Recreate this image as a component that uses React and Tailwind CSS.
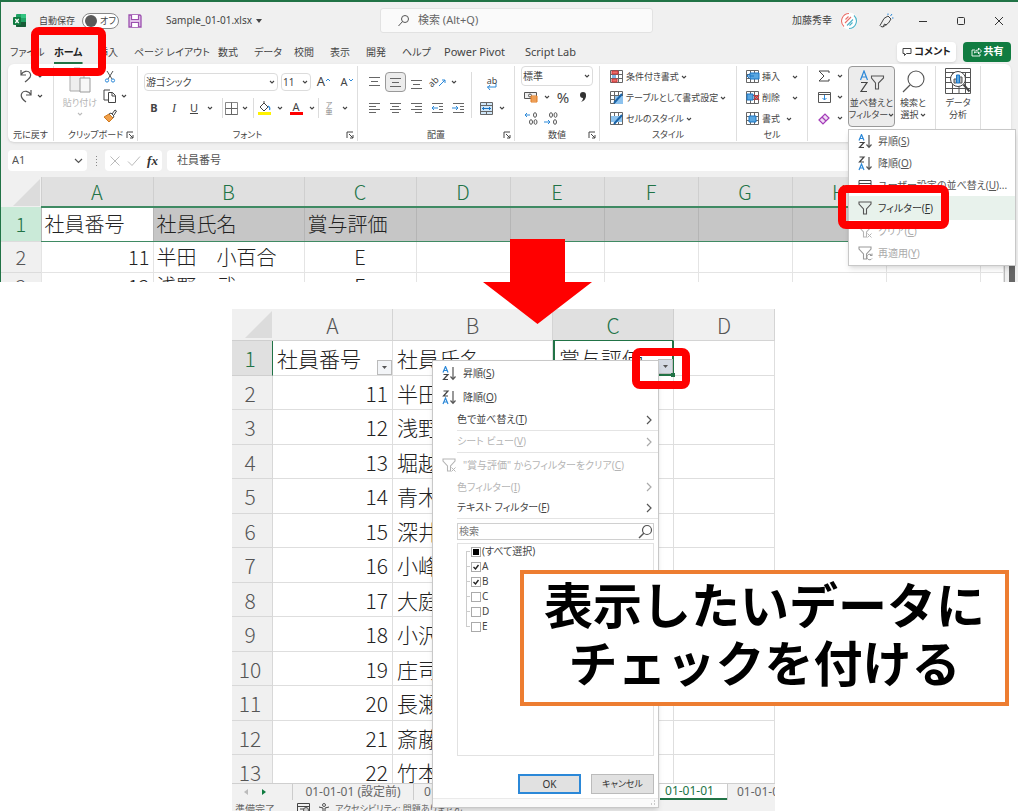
import React from "react";

const UI = "font-['Noto_Sans','Noto_Sans_CJK_JP',sans-serif] [font-feature-settings:'palt']";
const CELL = "font-['Noto_Sans_CJK_JP',sans-serif]";

function Svg({ w = 14, h = 14, box, className = "", children }) {
  return (
    <svg width={w} height={h} viewBox={box || `0 0 ${w} ${h}`} fill="none" stroke="#555" strokeWidth="1" className={`shrink-0 ${className}`} aria-hidden="true">
      {children}
    </svg>
  );
}

const Chevron = ({ className = "", color = "#444" }) => (
  <Svg w={6} h={6} className={className}>
    <path d="M1 2l2 2 2-2" stroke={color} strokeWidth="1.1" />
  </Svg>
);

const Right = ({ color = "#555" }) => (
  <Svg w={8} h={10} className="ml-auto">
    <path d="M2 1l4 4-4 4" stroke={color} strokeWidth="1.2" />
  </Svg>
);

const Launcher = () => (
  <Svg w={8} h={8}>
    <path d="M1 7V1h6M3 3l4 4M7 4v3H4" stroke="#444" />
  </Svg>
);

const Highlight = ({ className }) => (
  <span className={`pointer-events-none absolute z-20 rounded-lg border-8 border-[#ff0000] ${className}`} />
);

const SortIcon = ({ desc }) => (
  <Svg w={15} h={15}>
    {desc ? (
      <>
        <path d="M1.500 1h4.500l-4.500 5h4.500" stroke="#444" strokeWidth="1.200" />
        <path d="M1 14l2.500-6 2.500 6M2 12h3.500" stroke="#2b88d8" strokeWidth="1.200" />
      </>
    ) : (
      <>
        <path d="M1 6.500l2.500-6 2.500 6M2 4.500h3.500" stroke="#2b88d8" strokeWidth="1.200" />
        <path d="M1.500 8.500h4.500l-4.500 5h4.500" stroke="#444" strokeWidth="1.200" />
      </>
    )}
    <path d="M11 1v12M8.500 10.500l2.500 2.800 2.500-2.800" stroke="#555" strokeWidth="1.200" />
  </Svg>
);

const Funnel = ({ color = "#555", extra }) => (
  <Svg w={15} h={15}>
    <path d="M1 1h12v2l-4.500 5v5h-3v-5l-4.500-5z" stroke={color} strokeWidth="1.100" />
    {extra === "x" && <path d="M9.500 9.500l4 4M13.500 9.500l-4 4" stroke={color} />}
    {extra === "r" && <path d="M14 9.500a2.800 2.800 0 1 0 0 3M14 7.500v2h-2" stroke={color} />}
  </Svg>
);

const Lines = ({ rows }) => (
  <Svg w={13} h={13}>
    {rows.map(([x1, x2, y], i) => (
      <path key={i} d={`M${x1} ${y}.5H${x2}`} stroke="#666" />
    ))}
  </Svg>
);

function Tool({ label, className = "w-5", children }) {
  return (
    <button type="button" aria-label={label} className={`flex h-5 shrink-0 items-center justify-center ${className}`}>
      {children}
    </button>
  );
}

const More = ({ label }) => (
  <Tool label={label} className="w-3">
    <Chevron />
  </Tool>
);

const Rule = () => <span className="h-5 w-px shrink-0 bg-[#dcdcdc]" />;

function Group({ label, launcher, width, children }) {
  return (
    <section className={`flex shrink-0 flex-col border-r border-[#dedede] ${width}`}>
      <div className="h-[63px]">{children}</div>
      <div className="relative flex h-3 items-center justify-center text-[9px] leading-3 text-[#444]">
        {label}
        {launcher && (
          <button type="button" aria-label={`${label}の設定`} className="absolute right-[3px]">
            <Launcher />
          </button>
        )}
      </div>
    </section>
  );
}

function Combo({ label, value, className }) {
  return (
    <label className={`relative flex items-center rounded border border-[#dcdcdc] bg-white ${className}`}>
      <select aria-label={label} className="h-full w-full appearance-none bg-transparent px-px text-[10px] leading-4 text-[#444] outline-none">
        <option>{value}</option>
      </select>
      <Chevron className="pointer-events-none absolute right-[2px]" />
    </label>
  );
}

const TABS = [
  ["ファイル", "w-11"],
  ["ホーム", "w-11"],
  ["挿入", "w-9"],
  ["ページ レイアウト", "w-[84px]"],
  ["数式", "w-9"],
  ["データ", "w-10"],
  ["校閲", "w-9"],
  ["表示", "w-9"],
  ["開発", "w-9"],
  ["ヘルプ", "w-[42px]"],
  ["Power Pivot", "w-[81px]"],
  ["Script Lab", "w-20"],
];

function TitleBar() {
  return (
    <header className="flex h-[37px] items-center text-[10px] text-[#444]">
      <div className="flex w-[379px] shrink-0 items-center">
        <Svg w={13} h={13} className="ml-3">
          <rect x="3" y="0" width="10" height="13" rx="1" fill="#21a366" stroke="none" />
          <path d="M8 0h4a1 1 0 0 1 1 1v3H8z" fill="#33c481" stroke="none" />
          <path d="M3 8h10v4a1 1 0 0 1-1 1H4a1 1 0 0 1-1-1z" fill="#185c37" stroke="none" />
          <rect x="0" y="3" width="8" height="8" rx="1" fill="#107c41" stroke="none" />
          <path d="M2.300 5l3.400 4M5.700 5l-3.400 4" stroke="#fff" strokeWidth="1.200" />
        </Svg>
        <span className="ml-[13px] text-[9px]">自動保存</span>
        <button type="button" role="switch" aria-checked="false" aria-label="自動保存" className="ml-[7px] flex h-4 w-[37px] items-center gap-[3px] rounded-full border border-[#888] bg-white pl-[2px] text-[9px]">
          <span className="size-3 rounded-full bg-[#5a5a5a]" />
          オフ
        </button>
        <button type="button" aria-label="上書き保存" className="ml-[9px]">
          <Svg w={14} h={14}>
            <path d="M1 1h11l1 1v11H1z" fill="#e3c3ea" stroke="#9b4fae" strokeWidth="1.300" />
            <path d="M3.500 1v4.500h7V1M3.500 13V8.500h7V13" fill="#fff" stroke="#9b4fae" strokeWidth="1.200" />
          </Svg>
        </button>
        <span className="ml-6">Sample_01-01.xlsx</span>
        <Svg w={6} h={4} className="ml-1">
          <path d="M0 0h6l-3 4z" fill="#444" stroke="none" />
        </Svg>
      </div>
      <label className="flex h-[25px] flex-1 items-center gap-2 rounded-[3px] border border-[#e2e2e2] bg-[#fafafa] pl-4">
        <Svg w={13} h={13}>
          <circle cx="8" cy="5" r="3.500" />
          <path d="M5.500 7.500l-4 4.500" />
        </Svg>
        <input aria-label="検索" placeholder="検索 (Alt+Q)" className="min-w-0 flex-1 bg-transparent text-[11px] outline-none placeholder:text-[#666]" />
      </label>
      <div className="flex w-[365px] shrink-0 items-center pl-[139px]">
        <span className="text-[10px]">加藤秀幸</span>
        <Svg w={18} h={18} className="ml-2">
          <circle cx="9" cy="9" r="8.500" fill="#fff" stroke="none" />
          <path d="M9 1.500a7.500 7.500 0 0 0-5 13M5 11l6-6M5.500 7.500l3-3" stroke="#e8706a" strokeWidth="1.100" />
          <path d="M9 16.500a7.500 7.500 0 0 0 5-13M7 13.500l6-6M9.500 13.500l3-3" stroke="#4fb3c9" strokeWidth="1.100" />
        </Svg>
        <Svg w={16} h={16} className="ml-5">
          <path d="M2 12.500L6 5.500l4-2.500 3 3-2.500 4L5 14l-2-.5zM5 14l1.500-3 2 1" stroke="#444" strokeLinejoin="round" />
          <path d="M10 .500v1.500M12.500 3l1.500-2M14 5h1.500" stroke="#2b88d8" />
        </Svg>
        <button type="button" aria-label="最小化" className="ml-6">
          <Svg w={10} h={10}><path d="M1 5.500h8" stroke="#333" /></Svg>
        </button>
        <button type="button" aria-label="最大化" className="ml-7">
          <Svg w={10} h={10}><rect x="1.500" y="1.500" width="7" height="7" rx="1" stroke="#333" /></Svg>
        </button>
        <button type="button" aria-label="閉じる" className="ml-7">
          <Svg w={10} h={10}><path d="M1 1l8 8M9 1l-8 8" stroke="#333" /></Svg>
        </button>
      </div>
    </header>
  );
}

function TabBar() {
  return (
    <nav className="flex h-[25px] items-center pl-[9px] text-[10px] text-[#444]">
      {TABS.map(([name, width]) => (
        <div key={name} className={`relative shrink-0 ${width}`}>
          <button type="button" className={`whitespace-nowrap leading-5 ${name === "ホーム" ? "font-bold text-[#222] underline decoration-[#217346] decoration-2 underline-offset-[6px]" : ""} ${/^[PS]/.test(name) ? "text-[11px]" : ""}`}>
            {name}
          </button>
          {name === "ホーム" && <Highlight className="-left-[23px] -top-[15px] h-[49px] w-[75px]" />}
        </div>
      ))}
      <div className="ml-auto flex gap-[7px] pr-[7px] font-bold">
        <button type="button" className="flex h-5 w-[59px] items-center justify-center gap-[2px] rounded bg-white text-[#222] shadow-sm">
          <Svg w={10} h={10}><path d="M1 1.500h8v5H4.500L2.500 8.500v-2H1z" stroke="#444" /></Svg>
          コメント
        </button>
        <button type="button" className="flex h-5 w-12 items-center justify-center gap-[2px] rounded bg-[#107c41] text-white">
          <Svg w={11} h={10}><path d="M4 3H1v6h8V7M3.500 6c0-2.500 2-3 4-3V1l3 3-3 3V5c-2 0-3 0-4 1z" stroke="#fff" strokeWidth=".9" /></Svg>
          共有
        </button>
      </div>
    </nav>
  );
}

const GridBase = ({ children }) => (
  <Svg w={14} h={13}>
    <path d="M.5.5h12v12H.5zM.5 4.500h12M.5 8.500h12M4.500.5v12M8.500.5v12" stroke="#666" />
    {children}
  </Svg>
);

function SortMenu() {
  const items = [
    { icon: <SortIcon />, text: "昇順", key: "S" },
    { icon: <SortIcon desc />, text: "降順", key: "O" },
    {
      icon: (
        <Svg w={15} h={15}>
          <path d="M1 2.500h12v11H1zM1 5.500h12M4 11V8M7 8h3M7 11h3" stroke="#444" />
        </Svg>
      ),
      text: "ユーザー設定の並べ替え",
      key: "U",
      tail: "...",
    },
    { icon: <Funnel />, text: "フィルター", key: "F", active: true },
    { icon: <Funnel color="#b5b5b5" extra="x" />, text: "クリア", key: "C", off: true },
    { icon: <Funnel color="#999" extra="r" />, text: "再適用", key: "Y", off: true },
  ];
  return (
    <ul className="absolute left-0 top-full z-10 w-[168px] border border-[#c8c8c8] bg-white pb-px text-left text-[10px] text-[#555] shadow-md">
      {items.map((it) => (
        <li key={it.text} className={`relative ${it.active ? "bg-[#e8f2ec]" : ""}`}>
          <button type="button" disabled={it.off} className={`flex w-full items-center gap-[5px] whitespace-nowrap pl-[9px] ${it.active ? "h-6 text-[#333]" : "h-[22px]"} ${it.off ? "text-[#aaa]" : ""}`}>
            {it.icon}
            <span>
              {it.text}(<u>{it.key}</u>){it.tail}
            </span>
          </button>
          {it.active && <Highlight className="-left-[11px] -top-[11px] h-11 w-[111px]" />}
        </li>
      ))}
    </ul>
  );
}

function Ribbon() {
  return (
    <div className="mx-[7px] flex h-[78px] rounded-md bg-white pb-px pt-[2px] text-[9px] text-[#444] shadow-sm">
      <Group label="元に戻す" width="w-[46px]">
        <div className="flex items-center pl-[10px]">
          <Tool label="元に戻す" className="w-4">
            <Svg w={14} h={14}><path d="M2 1v5h5M2 6c2-4 7-5 9-2s0 5-5 9" strokeWidth="1.200" /></Svg>
          </Tool>
          <More label="元に戻すの履歴" />
        </div>
        <div className="flex items-center pl-[10px]">
          <Tool label="やり直し" className="w-4">
            <Svg w={14} h={14}><path d="M12 1v5H7M12 6C10 2 5 1 3 4s0 6 4 9" strokeWidth="1.200" /></Svg>
          </Tool>
          <More label="やり直しの履歴" />
        </div>
      </Group>

      <Group label="クリップボード" launcher width="w-[84px]">
        <div className="flex pl-2">
          <button type="button" className="flex w-9 flex-col items-center text-[#b5b5b5]">
            <Svg w={24} h={28} className="mb-px">
              <path d="M2 4h14v21H2z" fill="#eee" stroke="#aaa" />
              <path d="M6 2h6v4H6z" fill="#ccc" stroke="#aaa" />
              <path d="M12 12h10v14H12z" fill="#f7f7f7" stroke="#999" />
            </Svg>
            <span className="-mx-1 whitespace-nowrap leading-4">貼り付け</span>
            <Chevron color="#bbb" />
          </button>
          <div className="ml-1 flex flex-col">
            <Tool label="切り取り" className="w-4">
              <Svg w={12} h={13}>
                <path d="M3 1l5 8M9 1L4 9" stroke="#555" />
                <circle cx="3" cy="10.500" r="1.600" stroke="#2b88d8" />
                <circle cx="9" cy="10.500" r="1.600" stroke="#2b88d8" />
              </Svg>
            </Tool>
            <div className="flex">
              <Tool label="コピー" className="w-4">
                <Svg w={14} h={14}><path d="M5 11H1V1h6M5.500 3.500h4l3 3v7h-7zM9 3.500V7h3.500" stroke="#444" /></Svg>
              </Tool>
              <More label="コピーの種類" />
            </div>
            <Tool label="書式のコピー" className="w-4">
              <Svg w={14} h={14}>
                <path d="M1 8l5-3 4 4-4 4z" fill="#f0a04b" stroke="#d07a20" />
                <path d="M6 5l2-1 3 3-1 2M9 5l3-4 1.500 1L11 6" stroke="#444" />
              </Svg>
            </Tool>
          </div>
        </div>
      </Group>

      <Group label="フォント" launcher width="w-[220px]">
        <div className="flex h-8 items-center gap-[3px] pl-[6px]">
          <Combo label="フォント名" value="游ゴシック" className="h-[18px] w-[134px]" />
          <Combo label="フォント サイズ" value="11" className="h-[18px] w-[30px]" />
          <Tool label="拡大"><span className="text-[13px]">A</span><Svg w={6} h={10}><path d="M1 4l2-2 2 2" stroke="#2b88d8" /></Svg></Tool>
          <Tool label="縮小"><span className="text-[11px]">A</span><Svg w={6} h={10}><path d="M1 2l2 2 2-2" stroke="#2b88d8" /></Svg></Tool>
        </div>
        <div className="flex h-5 items-center pl-[6px] text-[11px]">
          <Tool label="太字"><b>B</b></Tool>
          <Tool label="斜体"><i className="font-['Liberation_Serif',serif] text-[12px]">I</i></Tool>
          <Tool label="下線"><u>U</u></Tool>
          <More label="下線の種類" />
          <span className="w-[6px]" /><Rule />
          <Tool label="罫線" className="w-4">
            <Svg w={13} h={13}><path d="M.5.5h12v12H.5z" stroke="#888" /><path d="M6.500.5v12M.5 6.500h12M.5 12.500h12" stroke="#666" /></Svg>
          </Tool>
          <More label="罫線の種類" />
          <span className="w-[2px]" /><Rule />
          <Tool label="塗りつぶし">
            <Svg w={13} h={14}>
              <path d="M2 6l4-4 4 4-4 4zM6 2V0" stroke="#444" />
              <path d="M10 5c2 1 2 3 1.500 4" stroke="#2b88d8" strokeWidth="1.300" />
              <path d="M0 11h13v3H0z" fill="#fff200" stroke="none" />
            </Svg>
          </Tool>
          <More label="塗りつぶしの色" />
          <Tool label="文字色">
            <span className="flex flex-col items-center"><span className="text-[11px] leading-[11px]">A</span><span className="h-[3px] w-[13px] bg-[#ff0000]" /></span>
          </Tool>
          <More label="文字色の選択" />
          <Rule />
          <Tool label="ふりがな">
            <span className="flex flex-col text-[7px] leading-[7px] text-[#888]"><span>ア</span><span>亜</span></span>
          </Tool>
          <More label="ふりがなの設定" />
        </div>
      </Group>

      <Group label="配置" launcher width="w-[157px]">
        <div className="flex pl-[6px]">
          <div className="flex w-[107px] flex-col">
            <div className="flex h-8 items-center">
              <Tool label="上揃え" className="w-[21px]"><Lines rows={[[1, 12, 1], [3, 10, 5], [1, 12, 9]]} /></Tool>
              <Tool label="上下中央揃え" className="w-[21px] rounded border border-[#999] bg-[#ececec]"><Lines rows={[[1, 12, 2], [3, 10, 6], [1, 12, 10]]} /></Tool>
              <Tool label="下揃え" className="w-[21px]"><Lines rows={[[1, 12, 4], [3, 10, 8], [1, 12, 12]]} /></Tool>
              <Tool label="方向" className="w-[21px]">
                <span className="-rotate-45 text-[9px]">ab</span>
                <Svg w={8} h={10}><path d="M0 9l6-6M3 3h3v3" stroke="#2b88d8" /></Svg>
              </Tool>
              <More label="方向の選択" />
            </div>
            <div className="flex h-5 items-center">
              <Tool label="左揃え" className="w-[21px]"><Lines rows={[[1, 12, 1], [1, 8, 4], [1, 12, 7], [1, 8, 10]]} /></Tool>
              <Tool label="中央揃え" className="w-[21px]"><Lines rows={[[1, 12, 1], [3, 10, 4], [1, 12, 7], [3, 10, 10]]} /></Tool>
              <Tool label="右揃え" className="w-[21px]"><Lines rows={[[1, 12, 1], [5, 12, 4], [1, 12, 7], [5, 12, 10]]} /></Tool>
              <Tool label="インデントを減らす" className="w-[21px]">
                <Svg w={13} h={13}><path d="M1 1.500h11M8 4.500h4M8 7.500h4M1 10.500h11" stroke="#666" /><path d="M7 6H1M3 4L1 6l2 2" stroke="#2b88d8" /></Svg>
              </Tool>
              <Tool label="インデントを増やす" className="w-[21px]">
                <Svg w={13} h={13}><path d="M1 1.500h11M8 4.500h4M8 7.500h4M1 10.500h11" stroke="#666" /><path d="M0 6h6M4 4l2 2-2 2" stroke="#2b88d8" /></Svg>
              </Tool>
            </div>
          </div>
          <div className="mt-[6px] flex flex-col border-l border-[#dcdcdc] pl-1">
            <Tool label="折り返し" className="h-6">
              <span className="flex flex-col items-center text-[9px] leading-[7px]">ab<Svg w={12} h={7}><path d="M1 3h9v-3M4 1L2 3.500 4 6" stroke="#2b88d8" /></Svg></span>
            </Tool>
            <div className="flex pt-[2px]">
              <Tool label="セルを結合">
                <Svg w={13} h={13}>
                  <path d="M.5.5h12v12H.5z" fill="#cfe6f8" stroke="#666" />
                  <path d="M.5 3.500h12M.5 9.500h12M6.500.5v3M6.500 9.500v3" stroke="#666" />
                  <path d="M2 6.500h9M4 5L2.500 6.500 4 8M9 5l1.500 1.500L9 8" stroke="#1b74c4" />
                </Svg>
              </Tool>
              <More label="結合の種類" />
            </div>
          </div>
        </div>
      </Group>

      <Group label="数値" launcher width="w-[85px]">
        <div className="px-[6px]">
          <Combo label="表示形式" value="標準" className="h-5" />
          <div className="flex h-[22px] items-center">
            <Tool label="通貨">
              <Svg w={14} h={12}>
                <path d="M.5 1.500h12v6H.5z" fill="#eee" stroke="#555" /><circle cx="6" cy="4.500" r="1.500" />
                <path d="M7 5h6v6H7zM7 7h6M7 9h6" fill="#f9c18a" stroke="#e07b20" />
              </Svg>
            </Tool>
            <More label="通貨の種類" />
            <Tool label="パーセント"><span className="text-[15px] leading-5">%</span></Tool>
            <Tool label="桁区切り"><svg width="8" height="12" viewBox="0 0 8 12" aria-hidden="true"><circle cx="4" cy="4" r="3" fill="#333" /><path d="M7 4c0 4-2 6-5 7 2-2 2-3 2-5z" fill="#333" /></svg></Tool>
          </div>
          <div className="flex">
            <Tool label="小数点以下を増やす">
              <Svg w={14} h={13}><path d="M6 3H1M3 1L1 3l2 2" stroke="#2b88d8" /><ellipse cx="11" cy="3" rx="1.500" ry="2.300" /><ellipse cx="7" cy="10" rx="1.500" ry="2.300" /><ellipse cx="11.500" cy="10" rx="1.500" ry="2.300" /></Svg>
            </Tool>
            <Tool label="小数点以下を減らす">
              <Svg w={14} h={13}><path d="M0 10h6M4 8l2 2-2 2" stroke="#2b88d8" /><ellipse cx="7" cy="3" rx="1.500" ry="2.300" /><ellipse cx="11.500" cy="3" rx="1.500" ry="2.300" /><ellipse cx="11" cy="10" rx="1.500" ry="2.300" /></Svg>
            </Tool>
          </div>
        </div>
      </Group>

      <Group label="スタイル" width="w-[137px]">
        <div className="flex flex-col pl-[10px]">
          <button type="button" className="flex h-[21px] items-center gap-[2px] whitespace-nowrap">
            <GridBase><path d="M2 1h6v3H2zM2 9h5v3H2z" fill="#e8706a" stroke="#d13438" /><path d="M2 5h4v3H2z" fill="#7fb7e6" stroke="none" /></GridBase>
            条件付き書式 <Chevron />
          </button>
          <button type="button" className="flex h-[21px] items-center gap-[2px] whitespace-nowrap">
            <GridBase><path d="M5 5h8v8H5z" fill="#8cc2ee" stroke="none" /><path d="M4 12l8-9" stroke="#1b64a8" strokeWidth="2" /></GridBase>
            テーブルとして書式設定 <Chevron />
          </button>
          <button type="button" className="flex h-[21px] items-center gap-[2px] whitespace-nowrap">
            <GridBase><path d="M1 4h11v6H1z" fill="#8cc2ee" stroke="none" /><path d="M4 12l8-9" stroke="#1b64a8" strokeWidth="2" /></GridBase>
            セルのスタイル <Chevron />
          </button>
        </div>
      </Group>

      <Group label="セル" width="w-[71px]">
        <div className="flex flex-col pl-[9px]">
          <button type="button" className="flex h-[21px] items-center gap-[2px]">
            <GridBase><path d="M4 3h9v6H4z" fill="#5ba7e0" stroke="#1b74c4" /><path d="M8 6H1M3 4L1 6l2 2" stroke="#1b74c4" /></GridBase>
            挿入 <Chevron className="ml-[10px]" />
          </button>
          <button type="button" className="flex h-[21px] items-center gap-[2px]">
            <GridBase><path d="M1 3h6v6H1z" fill="#5ba7e0" stroke="#1b74c4" /><path d="M8 4l5 5M13 4L8 9" stroke="#d13438" strokeWidth="1.400" /></GridBase>
            削除 <Chevron className="ml-[10px]" />
          </button>
          <button type="button" className="flex h-[21px] items-center gap-[2px]">
            <GridBase><path d="M3 4h7v6H3z" fill="#5ba7e0" stroke="#1b74c4" /></GridBase>
            書式 <Chevron className="ml-1" />
          </button>
        </div>
      </Group>

      <Group label="" width="w-[128px]">
        <div className="flex">
          <div className="flex w-10 shrink-0 flex-col pl-[6px]">
            <div className="flex h-[21px]"><Tool label="合計"><Svg w={12} h={12}><path d="M11 3V1H1l5 5-5 5h10V9" stroke="#444" /></Svg></Tool><More label="集計" /></div>
            <div className="flex h-[21px]"><Tool label="フィル"><Svg w={13} h={11}><path d="M.5.5h12v10H.5zM.5 2.500h12" /><path d="M6.500 3v5M4.500 6l2 2 2-2" stroke="#2b88d8" /></Svg></Tool><More label="フィルの方向" /></div>
            <div className="flex h-[21px]"><Tool label="クリア"><Svg w={13} h={13}><path d="M1 8l6-6 4 4-6 6zM4 5l4 4" fill="#f1dcf5" stroke="#a33cb8" strokeWidth="1.200" /></Svg></Tool><More label="クリアの種類" /></div>
          </div>
          <div className="relative w-[47px] shrink-0">
            <button type="button" aria-expanded="true" className="flex h-[61px] w-full flex-col items-center rounded border border-[#999] bg-[#ececec] pt-[3px] leading-3">
              <Svg w={26} h={23} className="mb-1">
                <path d="M1.500 10L5 1l3.500 9M2.500 7h5" stroke="#2b88d8" strokeWidth="1.200" />
                <path d="M2 12.500h6L2 21.500h6" stroke="#444" strokeWidth="1.200" />
                <path d="M12.500 6h12v2l-5 5v6h-3v-6l-4-5z" stroke="#555" strokeWidth="1.100" />
              </Svg>
              <span className="whitespace-nowrap">並べ替えと</span>
              <span className="flex items-center whitespace-nowrap">フィルター<Chevron /></span>
            </button>
            <SortMenu />
          </div>
          <button type="button" className="flex w-[36px] flex-col items-center pt-1 leading-3">
            <Svg w={26} h={23} className="mb-1"><circle cx="16" cy="9" r="8" strokeWidth="1.100" /><path d="M10 15l-7 7" strokeWidth="1.200" /></Svg>
            <span className="whitespace-nowrap">検索と</span>
            <span className="flex items-center gap-px whitespace-nowrap">選択<Chevron /></span>
          </button>
        </div>
      </Group>

      <Group label="" width="w-[45px]">
        <button type="button" className="flex w-full flex-col items-center pt-[2px] leading-3">
          <Svg w={26} h={26} className="mb-[3px]">
            <path d="M.5.5h25v25H.5zM.5 4.500h25M.5 9.500h25M.5 14.500h25M.5 20.500h25M7.500 4v21M14 14v11M20.500 4v21" stroke="#555" />
            <circle cx="13" cy="11" r="7.500" fill="#fff" stroke="#444" />
            <path d="M18.500 16.500l6 7" stroke="#444" strokeWidth="2" />
            <path d="M9 11h2.500v4H9zM14.500 9H17v6h-2.500z" fill="#bbb" /><path d="M11.500 7h3v8h-3z" fill="#5ba7e0" stroke="#1b74c4" />
          </Svg>
          <span>データ</span>
          <span>分析</span>
        </button>
      </Group>
    </div>
  );
}

function FormulaBar() {
  return (
    <div className="mx-[7px] mt-2 flex h-[21px] items-stretch text-[10px] text-[#555]">
      <label className="flex w-[79px] items-center justify-between rounded bg-white px-1">
        <input aria-label="名前ボックス" defaultValue="A1" className="w-10 bg-transparent text-[11px] outline-none" />
        <Svg w={9} h={9}><path d="M1 3l3.500 3.500L8 3" strokeWidth="1.200" /></Svg>
      </label>
      <span className="flex w-[18px] flex-col items-center justify-center gap-[2px]">
        <i className="size-px bg-[#888]" /><i className="size-px bg-[#888]" /><i className="size-px bg-[#888]" /><i className="size-px bg-[#888]" />
      </span>
      <div className="flex w-[57px] items-center justify-around rounded bg-white px-px">
        <button type="button" aria-label="キャンセル"><Svg w={12} h={12}><path d="M1.500 1.500l9 9M10.500 1.500l-9 9" stroke="#bbb" /></Svg></button>
        <button type="button" aria-label="入力"><Svg w={14} h={12}><path d="M1 6.500l4 4 8-9" stroke="#bbb" /></Svg></button>
        <button type="button" className="font-['Liberation_Serif',serif] text-[13px] font-bold italic text-[#333]">fx</button>
      </div>
      <input aria-label="数式バー" defaultValue="社員番号" className="ml-[5px] min-w-0 flex-1 rounded bg-white pl-[10px] text-[11px] outline-none" />
    </div>
  );
}

const Corner = () => (
  <svg className="ml-auto mr-px block h-[27px] w-[27px]" viewBox="0 0 27 27" aria-hidden="true">
    <path d="M27 0v27H0z" fill="#dcdcdc" />
  </svg>
);

function TopSheet() {
  const cols = ["A", "B", "C", "D", "E", "F", "G", "H", "I", ""];
  const rows = [
    ["1", "社員番号", "社員氏名", "賞与評価"],
    ["2", "11", "半田　小百合", "E"],
    ["3", "12", "浅野　武", "E"],
  ];
  const heights = ["h-[34px]", "h-[31px]", "h-7"];
  return (
    <div className={`mt-[6px] flex h-[105px] overflow-hidden ${CELL}`}>
      <div className="min-w-0 flex-1">
        <table className="w-full table-fixed border-collapse text-[20px] leading-6 font-light text-[#222]">
          <colgroup>
            <col className="w-10" />
            <col className="w-[112px]" />
            <col className="w-[151px]" />
            <col className="w-[112px]" />
            {cols.slice(3, 9).map((c) => <col key={c} className="w-[94px]" />)}
            <col />
          </colgroup>
          <thead>
            <tr className="h-[30px]">
              <th className="bg-[#f0f0f0] p-0"><Corner /></th>
              {cols.map((c) => (
                <th key={c} scope="col" className="border-x border-[#cfcfcf] bg-[#e0e0e0] p-0 font-light text-[#217346]">{c}</th>
              ))}
            </tr>
          </thead>
          <tbody>
            {rows.map((r, i) => (
              <tr key={r[0]} className={heights[i]}>
                <th scope="row" className={`p-0 font-light ${i === 0 ? "bg-[#caead8] text-[#217346]" : "border-t border-[#dcdcdc] bg-[#f0f0f0] text-[#555]"}`}>{r[0]}</th>
                {cols.map((c, j) => (
                  <td
                    key={c}
                    className={`whitespace-nowrap border px-[3px] py-0 ${i === 0 ? "border-x-[#b5b5b5] border-t-2 border-y-[#3f8a63]" : "border-[#e4e4e4]"} ${i === 0 && j > 0 ? "bg-[#c6c6c6]" : "bg-white"} ${j === 0 && i > 0 ? "text-right" : ""} ${j === 2 && i > 0 ? "text-center" : ""}`}
                  >
                    {r[j + 1]}
                  </td>
                ))}
              </tr>
            ))}
          </tbody>
        </table>
      </div>
      <div className="flex w-[14px] justify-center border-l border-[#bbb] bg-[#f0f0f0]">
        <span className="mt-[86px] h-5 w-[6px] bg-[#666]" />
      </div>
    </div>
  );
}

const FilterButton = ({ label, className }) => (
  <button type="button" aria-label={label} className={`absolute flex size-[15px] items-center justify-center border border-[#bbb] ${className}`}>
    <Svg w={5} h={3}><path d="M0 0h5l-2.500 3z" fill="#555" stroke="none" /></Svg>
  </button>
);

const PEOPLE = [
  ["11", "半田"], ["12", "浅野"], ["13", "堀越"], ["14", "青木"], ["15", "深井"], ["16", "小峰"],
  ["17", "大庭"], ["18", "小沢"], ["19", "庄司"], ["20", "長瀬"], ["21", "斎藤"], ["22", "竹本"],
];

function FilterSheet() {
  const line = "border-r border-b border-[#dedede] py-0";
  return (
    <div className={`h-[474px] overflow-hidden ${CELL}`}>
      <table className="w-full table-fixed border-separate border-spacing-0 text-[21px] leading-6 font-light text-[#222]">
        <colgroup>
          <col className="w-[41px]" />
          <col className="w-[120px]" />
          <col className="w-40" />
          <col className="w-[121px]" />
          <col />
        </colgroup>
        <thead>
          <tr className="h-8 text-[#555]">
            <th className="border-b border-[#cfcfcf] bg-[#f0f0f0] p-0"><Corner /></th>
            {["A", "B", "C", "D"].map((c) => (
              <th key={c} scope="col" className={`border-r border-b p-0 font-light ${c === "C" ? "border-[#cfcfcf] border-b-[#217346] bg-[#e0e0e0] text-[#217346]" : "border-[#d4d4d4] bg-[#f0f0f0]"}`}>{c}</th>
            ))}
          </tr>
        </thead>
        <tbody>
          <tr className="h-[35px]">
            <th scope="row" className="border-b border-r border-[#cfcfcf] border-r-[#217346] bg-[#e0e0e0] p-0 pr-1 font-light text-[#217346]">1</th>
            <td className={`relative px-1 ${line}`}>社員番号<FilterButton label="社員番号のフィルター" className="bottom-0 right-0 bg-[#f3f5f8]" /></td>
            <td className={`px-1 ${line}`}>社員氏名</td>
            <td className="relative border-2 border-t-0 border-[#217346] px-1 py-0">
              賞与評価
              <FilterButton label="賞与評価のフィルター" className="-right-px bottom-0 bg-[#d5dbe4]" />
              <span className="absolute -bottom-[3px] -right-[3px] size-1 bg-[#217346]" />
              <Highlight className="-right-[18px] -bottom-[15px] h-[41px] w-[58px]" />
            </td>
            <td className={line} />
          </tr>
          {PEOPLE.map(([n, name], i) => (
            <tr key={n} className="odd:h-[35px] even:h-[34px]">
              <th scope="row" className="border-b border-r border-[#d8d8d8] bg-[#f0f0f0] p-0 pr-1 font-light text-[#555]">{i + 2}</th>
              <td className={`px-1 text-right ${line}`}>{n}</td>
              <td className={`px-1 ${line}`}>{name}</td>
              <td className={line} />
              <td className={line} />
            </tr>
          ))}
        </tbody>
      </table>
    </div>
  );
}

function Check({ label, mixed, checked }) {
  return (
    <label className="flex h-[15px] items-center gap-px whitespace-nowrap">
      <span className="h-px w-1 bg-[#ccc]" />
      <span className="relative flex size-[10px] items-center justify-center">
        <input
          type="checkbox"
          defaultChecked={checked}
          ref={(el) => { if (el) el.indeterminate = Boolean(mixed); }}
          className="peer absolute inset-0 size-[10px] appearance-none border border-[#aaa] bg-white"
        />
        {mixed ? (
          <span className="pointer-events-none relative size-[6px] bg-black" />
        ) : (
          <svg width="8" height="8" viewBox="0 0 8 8" className="pointer-events-none relative hidden peer-checked:block" aria-hidden="true">
            <path d="M1.500 4l2 2 3-4" fill="none" stroke="#222" strokeWidth="1.400" />
          </svg>
        )}
      </span>
      {label}
    </label>
  );
}

function Item({ icon, text, k, off, arrow, rule, height = "h-[22px]" }) {
  return (
    <li className="relative">
      <button type="button" disabled={off} className={`flex w-full items-center whitespace-nowrap pr-[5px] ${height} ${icon ? "gap-[6px] pl-[9px]" : "pl-6"} ${off ? "text-[#b5b5b5]" : "text-[#444]"}`}>
        {icon}
        <span>{text}(<u>{k}</u>)</span>
        {arrow && <Right color={off ? "#aaa" : "#555"} />}
      </button>
      {rule && <hr className="ml-6 border-[#e4e4e4]" />}
    </li>
  );
}

function FilterMenu() {
  return (
    <div className={`absolute left-[200px] top-[51px] z-10 flex h-[448px] w-[227px] flex-col border border-[#c8c8c8] bg-white text-[10px] shadow-md ${UI}`}>
      <ul>
        <Item icon={<SortIcon />} text="昇順" k="S" height="h-6" />
        <Item icon={<SortIcon desc />} text="降順" k="O" height="h-6" />
        <Item text="色で並べ替え" k="T" arrow rule height="h-[21px]" />
        <Item text="シート ビュー" k="V" off arrow rule height="h-[21px]" />
        <Item icon={<Funnel color="#b5b5b5" extra="x" />} text={"\"賞与評価\" からフィルターをクリア"} k="C" off height="h-6" />
        <Item text="色フィルター" k="I" off arrow height="h-5" />
        <Item text="テキスト フィルター" k="F" arrow rule height="h-[21px]" />
      </ul>
      <div className="mx-1 ml-6 mt-1 flex flex-1 flex-col">
        <label className="flex h-[17px] items-center border border-[#d0d0d0]">
          <input aria-label="検索" placeholder="検索" className="min-w-0 flex-1 bg-transparent pl-px outline-none placeholder:text-[#777]" />
          <Svg w={15} h={15}><circle cx="9" cy="6" r="4.500" strokeWidth="1.200" /><path d="M6 9l-5 5" strokeWidth="1.400" /></Svg>
        </label>
        <div className="mt-[3px] h-[213px] border border-[#e2e2e2] pl-2 text-[#444]">
          <div className="relative">
            <span className="absolute bottom-[7px] left-0 top-[7px] w-px bg-[#ccc]" />
            <Check label="(すべて選択)" mixed />
            <Check label="A" checked />
            <Check label="B" checked />
            <Check label="C" />
            <Check label="D" />
            <Check label="E" />
          </div>
        </div>
        <div className="mt-[18px] flex justify-end gap-[10px]">
          <button type="button" className="h-5 w-[63px] border-2 border-[#2b88d8] bg-[#e1e1e1] leading-4 text-[#333]">OK</button>
          <button type="button" className="h-5 w-[63px] border border-[#bbb] bg-[#e1e1e1] text-[9px] leading-4 text-[#333]">キャンセル</button>
        </div>
      </div>
      <div className="flex h-[9px] justify-end border-t border-[#eaeaea] bg-[#fafafa] pr-px">
        <Svg w={8} h={8}><path d="M5 2h1M2 5h1M5 5h1" stroke="#999" /></Svg>
      </div>
    </div>
  );
}

function SheetFooter() {
  return (
    <div className={`bg-[#f1f1f1] text-[#666] ${UI}`}>
      <div className="flex h-[17px] items-center overflow-hidden whitespace-nowrap border-t border-[#cfcfcf] text-[12px] leading-4">
        <button type="button" aria-label="前のシート" className="w-[30px] pl-3"><Svg w={4} h={6}><path d="M4 0v6L0 3z" fill="#bbb" stroke="none" /></Svg></button>
        <button type="button" aria-label="次のシート" className="w-[30px]"><Svg w={5} h={6}><path d="M0 0v6l4-3z" fill="#107c41" stroke="none" /></Svg></button>
        <button type="button" className="w-[121px] border-l border-[#ccc] text-center leading-4">01-01-01 (設定前)</button>
        <button type="button" className="flex-1 border-l border-[#ccc] pl-[10px] text-left leading-4">01-01</button>
        <button type="button" className="h-full w-[67px] border-b-2 border-[#217346] bg-white pr-2 leading-[14px] text-[#217346]">01-01-01</button>
        <button type="button" className="w-12 shrink-0 overflow-hidden border-l border-[#ccc] pl-[9px] text-left leading-4">01-01-01</button>
      </div>
      <div className="flex h-[11px] items-start overflow-hidden whitespace-nowrap pl-[3px] pt-[3px] text-[9px] leading-3">
        <span className="w-[62px] text-[10px]">準備完了</span>
        <Svg w={13} h={12}><path d="M.5.5h12v10H.5zM.5 3.500h12M3 6h7" stroke="#444" /><circle cx="9" cy="7" r="2.500" fill="#ccc" /></Svg>
        <Svg w={13} h={12} className="ml-2 mr-1"><circle cx="6" cy="2" r="1.500" /><path d="M1 4l4 1v3l-2 4M11 4L7 5v3l2 4" stroke="#444" /></Svg>
        <span>アクセシビリティ: 問題ありません</span>
      </div>
    </div>
  );
}

export default function App() {
  return (
    <main className={`relative min-h-screen w-full overflow-hidden bg-white ${UI}`}>
      <section className="border-l border-t-2 border-[#217346] bg-[#f0f0f0]">
        <TitleBar />
        <TabBar />
        <Ribbon />
        <FormulaBar />
        <TopSheet />
      </section>

      <svg className="absolute left-[483px] top-[239px] z-10" width="109" height="85" viewBox="0 0 109 85" aria-hidden="true">
        <path d="M27 0h55v43h27L54.500 85 0 43h27z" fill="#ff0000" />
      </svg>

      <section className="relative ml-[232px] mr-[243px] mt-[27px]">
        <FilterSheet />
        <SheetFooter />
        <FilterMenu />
      </section>

      <p className="absolute right-[9px] top-[570px] z-20 flex h-[136px] w-[489px] flex-col items-center border-4 border-[#ed7d31] bg-white text-[49px] font-bold leading-[58px] text-black [font-feature-settings:normal] font-['Noto_Sans_CJK_JP',sans-serif]">
        <span>表示したいデータに</span>
        <span>チェックを付ける</span>
      </p>
    </main>
  );
}
